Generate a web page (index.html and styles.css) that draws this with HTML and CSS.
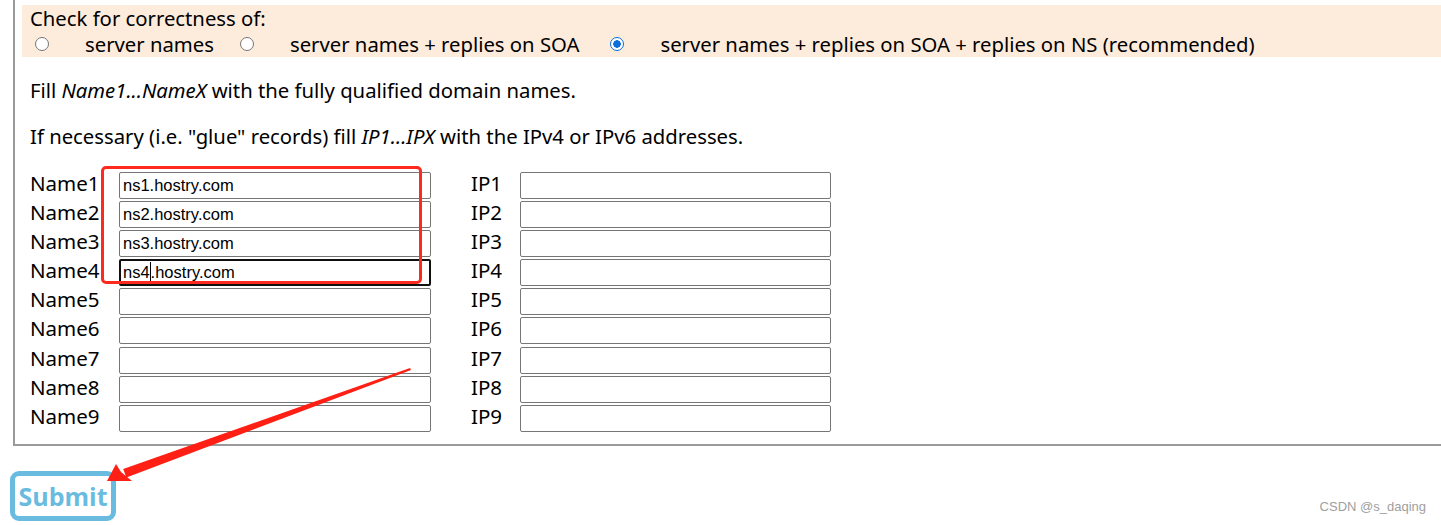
FILE: index.html
```html
<!DOCTYPE html>
<html>
<head>
<meta charset="utf-8">
<link rel="stylesheet" href="styles.css">
</head>
<body>
<div class="page">
  <div class="fieldset">
    <div class="checkbox-panel">
      <div class="check-title">Check for correctness of:</div>
      <div class="radio-row">
        <span class="radio"></span><span class="opt opt1">server names</span>
        <span class="radio"></span><span class="opt opt2">server names + replies on SOA</span>
        <span class="radio checked"></span><span class="opt">server names + replies on SOA + replies on NS (recommended)</span>
      </div>
    </div>
    <p class="info first">Fill <i>Name1...NameX</i> with the fully qualified domain names.</p>
    <p class="info">If necessary (i.e. "glue" records) fill <i>IP1...IPX</i> with the IPv4 or IPv6 addresses.</p>
    <div class="grid">
      <span class="lbl">Name1</span><span class="inp">ns1.hostry.com</span><span class="lbl ip">IP1</span><span class="inp"></span>
      <span class="lbl">Name2</span><span class="inp">ns2.hostry.com</span><span class="lbl ip">IP2</span><span class="inp"></span>
      <span class="lbl">Name3</span><span class="inp">ns3.hostry.com</span><span class="lbl ip">IP3</span><span class="inp"></span>
      <span class="lbl">Name4</span><span class="inp focus">ns4<span class="caret"></span>.hostry.com</span><span class="lbl ip">IP4</span><span class="inp"></span>
      <span class="lbl">Name5</span><span class="inp"></span><span class="lbl ip">IP5</span><span class="inp"></span>
      <span class="lbl">Name6</span><span class="inp"></span><span class="lbl ip">IP6</span><span class="inp"></span>
      <span class="lbl">Name7</span><span class="inp"></span><span class="lbl ip">IP7</span><span class="inp"></span>
      <span class="lbl">Name8</span><span class="inp"></span><span class="lbl ip">IP8</span><span class="inp"></span>
      <span class="lbl">Name9</span><span class="inp"></span><span class="lbl ip">IP9</span><span class="inp"></span>
    </div>
  </div>
  <div class="submit-row">
    <span class="submit">Submit</span>
  </div>
  <div class="highlight"></div>
  <svg class="arrow" width="1441" height="525" viewBox="0 0 1441 525">
    <path d="M410 368 L411 370 L126.4 477.5 L123.2 469 Z" fill="#ff1f14"/>
    <path d="M107 481 L116 464 L121 472 L132 481 Z" fill="#ff1f14"/>
  </svg>
  <div class="watermark">CSDN @s_daqing</div>
</div>
</body>
</html>
```
FILE: styles.css
```css
html, body {
  margin: 0;
  padding: 0;
  background: #ffffff;
}
body {
  font-family: "Noto Sans", "Open Sans", sans-serif;
  color: #000;
}
.page {
  position: relative;
  width: 1441px;
  height: 525px;
  overflow: hidden;
}
.fieldset {
  margin-left: 13px;
  border-left: 2px solid #9a9a9a;
  border-bottom: 2px solid #9a9a9a;
  padding: 5px 0 12px 7px;
}
.checkbox-panel {
  background: #fdebdc;
  padding-left: 8px;
  font-size: 20.3px;
  line-height: 26px;
}
.check-title {
  height: 26px;
}
.radio-row {
  display: flex;
  align-items: center;
  height: 26px;
}
.radio {
  width: 14px;
  height: 14px;
  border: 1px solid #767676;
  border-radius: 50%;
  background: #fff;
  box-sizing: border-box;
  margin-left: 5px;
  margin-right: 36px;
  flex: none;
}
.radio.checked {
  border: 1.5px solid #0b6ed9;
  background: radial-gradient(circle, #0b6ed9 0 3.5px, #fff 4px);
}
.opt1 { margin-right: 21px; }
.opt2 { margin-right: 26px; }
.info {
  font-size: 20.3px;
  line-height: 26px;
  margin: 0 0 0 8px;
}
.info.first {
  margin-top: 20px;
  margin-bottom: 20px;
}
.grid {
  margin: 23px 0 0 8px;
  display: grid;
  grid-template-columns: 89px 312px 40px 49px 311px;
  grid-auto-rows: 27px;
  row-gap: 2.1px;
  font-size: 20.5px;
}
.lbl {
  line-height: 27px;
  grid-column: 1;
  margin-top: -2px;
}
.lbl.ip {
  grid-column: 4;
}
.inp {
  border: 1px solid #767676;
  border-radius: 2px;
  box-sizing: border-box;
  height: 27px;
  font-family: "Liberation Sans", Arial, sans-serif;
  font-size: 16.5px;
  line-height: 25px;
  padding-left: 3px;
  background: #fff;
  white-space: nowrap;
}
.inp.focus {
  border: 2px solid #101010;
  padding-left: 2px;
  line-height: 23px;
}
.caret {
  display: inline-block;
  width: 1px;
  height: 20px;
  background: #000;
  vertical-align: -4px;
}
.submit-row {
  padding: 25px 0 0 10px;
}
.submit {
  display: inline-block;
  box-sizing: border-box;
  width: 106px;
  height: 50px;
  border: 5px solid #69bbdf;
  border-radius: 9px;
  color: #69bbdf;
  font-family: "Open Sans", "Noto Sans", sans-serif;
  font-weight: 700;
  font-size: 25px;
  line-height: 40px;
  text-align: center;
}
.highlight {
  position: absolute;
  left: 101px;
  top: 166px;
  width: 321px;
  height: 118px;
  box-sizing: border-box;
  border: 3px solid #ff2a1f;
  border-radius: 5px;
}
.arrow {
  position: absolute;
  left: 0;
  top: 0;
}
.watermark {
  position: absolute;
  right: 15px;
  top: 499px;
  font-family: "Liberation Sans", Arial, sans-serif;
  font-size: 13px;
  color: #a0a0a0;
}
```
